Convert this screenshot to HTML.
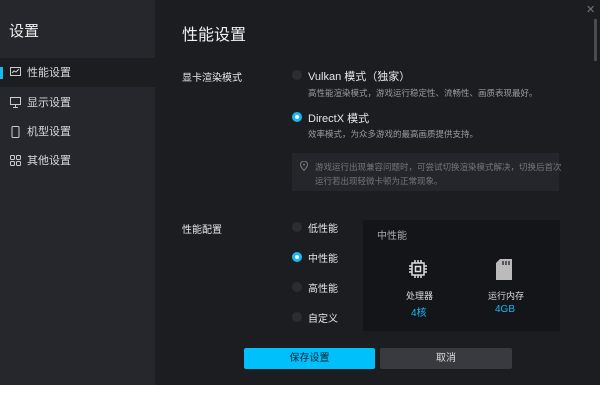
<!DOCTYPE html>
<html><head><meta charset="utf-8"><style>
*{margin:0;padding:0;box-sizing:border-box}
body{width:600px;height:410px;background:#fff;font-family:"Liberation Sans","Noto Sans CJK SC",sans-serif;position:relative;overflow:hidden}
.app{position:absolute;left:0;top:0;width:600px;height:385px;background:#1c1d21}
.side{position:absolute;left:0;top:0;width:155px;height:385px;background:#26272c}
.a{position:absolute;white-space:nowrap}
.ni{position:absolute;left:0;width:155px;height:29px;font-size:11px;color:#d8d8dc;line-height:31px;padding-left:27px}
.ni svg{position:absolute;left:10px;top:9px}
.act{background:#1c1d21}
.rad{position:absolute;width:10px;height:10px;border-radius:50%;background:#2c2d32}
.on{background:#1ab8f0}
.on::after{content:"";position:absolute;left:3px;top:3px;width:4px;height:4px;border-radius:50%;background:#fff}
.t{font-size:11px;color:#e6e6ea}
.s{font-size:8.5px;color:#9a9ba2}
</style></head><body>
<div class="app">
<div class="side">
<div class="a" style="left:9px;top:20px;font-size:15px;color:#eee">设置</div>
<div class="ni act" style="top:58px"><div style="position:absolute;left:0;top:9px;width:3px;height:12px;background:#1ab8f0"></div><svg width="11" height="10" viewBox="0 0 11 10"><rect x=".5" y=".5" width="10" height="8" fill="none" stroke="#ccc"/><path d="M2 6l2-2 2 1 3-3" stroke="#ccc" fill="none"/></svg>性能设置</div>
<div class="ni" style="top:88px"><svg width="11" height="11" viewBox="0 0 11 11"><rect x=".5" y=".5" width="10" height="7" fill="none" stroke="#ccc"/><path d="M5.5 8v2M3 10.5h5" stroke="#ccc"/></svg>显示设置</div>
<div class="ni" style="top:117px"><svg width="11" height="12" viewBox="0 0 11 12"><rect x="2" y=".5" width="7" height="11" rx="1" fill="none" stroke="#ccc"/></svg>机型设置</div>
<div class="ni" style="top:146px"><svg width="11" height="11" viewBox="0 0 11 11" fill="none" stroke="#ccc"><rect x=".5" y=".5" width="4" height="4" rx="1"/><rect x="6.5" y=".5" width="4" height="4" rx="1"/><rect x=".5" y="6.5" width="4" height="4" rx="1"/><rect x="6.5" y="6.5" width="4" height="4" rx="1"/></svg>其他设置</div>
</div>
<div class="a" style="left:586px;top:3px;font-size:11px;color:#777">✕</div>
<div style="position:absolute;left:594px;top:19px;width:3px;height:42px;background:#4a4b50"></div>
<div class="a" style="left:182px;top:21px;font-size:16px;color:#f0f0f0">性能设置</div>
<div class="a t" style="left:182px;top:69px;font-size:10px">显卡渲染模式</div>
<div class="rad" style="left:292px;top:70px"></div>
<div class="a t" style="left:308px;top:68px">Vulkan 模式（独家）</div>
<div class="a s" style="left:308px;top:87px">高性能渲染模式，游戏运行稳定性、流畅性、画质表现最好。</div>
<div class="rad on" style="left:292px;top:112px"></div>
<div class="a t" style="left:308px;top:110px">DirectX 模式</div>
<div class="a s" style="left:308px;top:128px">效率模式，为众多游戏的最高画质提供支持。</div>
<div style="position:absolute;left:292px;top:153px;width:267px;height:38px;background:#25262b"></div>
<svg class="a" style="left:300px;top:161px" width="8" height="10" viewBox="0 0 8 10"><path d="M4 9.5C1 6 .5 5 .5 3.5a3.5 3.5 0 017 0C7.5 5 7 6 4 9.5z" fill="none" stroke="#777"/><circle cx="4" cy="3.5" r="1" fill="#777"/></svg>
<div class="a s" style="left:315px;top:160px;color:#75767c;line-height:14px">游戏运行出现兼容问题时，可尝试切换渲染模式解决，切换后首次<br>运行若出现轻微卡顿为正常现象。</div>
<div class="a t" style="left:182px;top:221px;font-size:10px">性能配置</div>
<div class="rad" style="left:292px;top:222px"></div><div class="a t" style="left:308px;top:220px;font-size:10px">低性能</div>
<div class="rad on" style="left:292px;top:252px"></div><div class="a t" style="left:308px;top:250px;font-size:10px">中性能</div>
<div class="rad" style="left:292px;top:282px"></div><div class="a t" style="left:308px;top:280px;font-size:10px">高性能</div>
<div class="rad" style="left:292px;top:312px"></div><div class="a t" style="left:308px;top:310px;font-size:10px">自定义</div>
<div style="position:absolute;left:363px;top:220px;width:197px;height:111px;background:#141518"></div>
<div class="a" style="left:377px;top:227px;font-size:10px;color:#aaa">中性能</div>
<svg class="a" style="left:408px;top:259px" width="20" height="20" viewBox="0 0 20 20" fill="none" stroke="#ddd" stroke-width="1.5"><rect x="4" y="4" width="12" height="12"/><rect x="7.5" y="7.5" width="5" height="5"/><path d="M7 1v3M10 1v3M13 1v3M7 16v3M10 16v3M13 16v3M1 7h3M1 10h3M1 13h3M16 7h3M16 10h3M16 13h3"/></svg>
<svg class="a" style="left:496px;top:259px" width="16" height="21" viewBox="0 0 16 21"><path d="M4 0h12v21H0V4z" fill="#bbb"/><path d="M7 2v4M10 2v4M13 2v4" stroke="#141518" stroke-width="1.2"/></svg>
<div class="a" style="left:406px;top:289px;font-size:9px;color:#ddd">处理器</div>
<div class="a" style="left:411px;top:304px;font-size:10px;color:#1ab8f0">4核</div>
<div class="a" style="left:488px;top:289px;font-size:9px;color:#ddd">运行内存</div>
<div class="a" style="left:495px;top:304px;font-size:10px;color:#1ab8f0">4GB</div>
<div style="position:absolute;left:244px;top:348px;width:131px;height:21px;background:#00c0fc;border-radius:2px;text-align:center;line-height:21px;font-size:10px;color:#123">保存设置</div>
<div style="position:absolute;left:380px;top:348px;width:132px;height:21px;background:#393a3f;border-radius:2px;text-align:center;line-height:21px;font-size:10px;color:#ddd">取消</div>
</div>
</body></html>
